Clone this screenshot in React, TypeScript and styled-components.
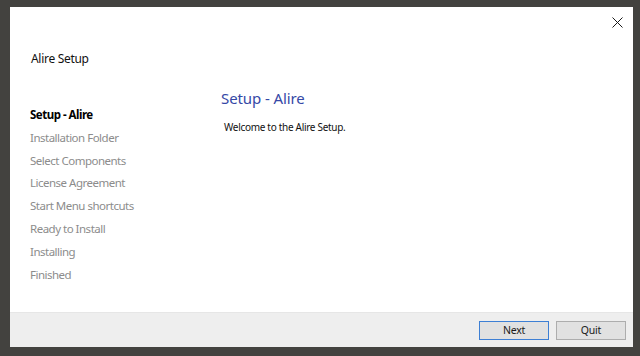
import React from "react";
import styled, { createGlobalStyle, css } from "styled-components";

const GlobalStyle = createGlobalStyle`
  html, body {
    margin: 0;
    padding: 0;
    height: 356px;
    background: #43423f;
    font-family: "Noto Sans", "DejaVu Sans", sans-serif;
    overflow: hidden;
  }
`;

const steps = [
  "Setup - Alire",
  "Installation Folder",
  "Select Components",
  "License Agreement",
  "Start Menu shortcuts",
  "Ready to Install",
  "Installing",
  "Finished",
];

function App() {
  return (
    <>
      <GlobalStyle />
      <Window>
        <TopBar>
          <CloseButton aria-label="Close">
            <svg width="11" height="11" viewBox="0 0 11 11">
              <path d="M0.5 0.5 L10.5 10.5 M10.5 0.5 L0.5 10.5" stroke="#1a1a1a" strokeWidth="1" fill="none" />
            </svg>
          </CloseButton>
        </TopBar>
        <AppTitle>Alire Setup</AppTitle>
        <Body>
          <Sidebar>
            {steps.map((s, i) => (
              <Step key={s} active={i === 0}>
                {s}
              </Step>
            ))}
          </Sidebar>
          <Content>
            <PageTitle>Setup - Alire</PageTitle>
            <Welcome>Welcome to the Alire Setup.</Welcome>
          </Content>
        </Body>
        <Footer>
          <Button primary>Next</Button>
          <Button>Quit</Button>
        </Footer>
      </Window>
    </>
  );
}

export default App;

const Window = styled.div`
  margin: 7px 0 0 10px;
  width: 623px;
  height: 340px;
  background: #fff;
  display: flex;
  flex-direction: column;
  box-sizing: border-box;
`;

const TopBar = styled.div`
  height: 30px;
  display: flex;
  justify-content: flex-end;
  align-items: center;
  padding-right: 10px;
`;

const CloseButton = styled.div`
  width: 11px;
  height: 11px;
  display: flex;
`;

const AppTitle = styled.div`
  margin-top: 14px;
  padding-left: 21px;
  font-size: 12px;
  letter-spacing: -0.3px;
  line-height: 16px;
  color: #111;
`;

const Body = styled.div`
  flex: 1;
  display: flex;
  margin-top: 10px;
`;

const Sidebar = styled.div`
  width: 211px;
  flex-shrink: 0;
  padding: 27px 0 0 20px;
  box-sizing: border-box;
  display: flex;
  flex-direction: column;
`;

const Step = styled.div<{ active?: boolean }>`
  font-size: 11.5px;
  letter-spacing: -0.5px;
  line-height: 22.8px;
  white-space: nowrap;
  color: #8c8c8c;
  ${(p) =>
    p.active &&
    css`
      color: #000;
      font-weight: 700;
    `}
`;

const Content = styled.div`
  flex: 1;
  padding-top: 11px;
`;

const PageTitle = styled.div`
  font-size: 15px;
  letter-spacing: -0.1px;
  line-height: 20px;
  color: #3548a6;
`;

const Welcome = styled.div`
  margin-top: 12px;
  padding-left: 3px;
  font-size: 10px;
  letter-spacing: -0.3px;
  line-height: 14px;
  color: #111;
`;

const Footer = styled.div`
  height: 35px;
  box-sizing: border-box;
  background: #eeeeee;
  border-top: 1px solid #e6e6e6;
  display: flex;
  justify-content: flex-end;
  align-items: center;
  gap: 7px;
  padding-right: 7px;
`;

const Button = styled.div<{ primary?: boolean }>`
  width: 70px;
  height: 19px;
  box-sizing: border-box;
  display: flex;
  align-items: center;
  justify-content: center;
  background: #e1e1e1;
  border: 1px solid #adadad;
  font-size: 10.5px;
  letter-spacing: -0.2px;
  color: #1a1a1a;
  ${(p) =>
    p.primary &&
    css`
      border-color: #3d7fd4;
    `}
`;
